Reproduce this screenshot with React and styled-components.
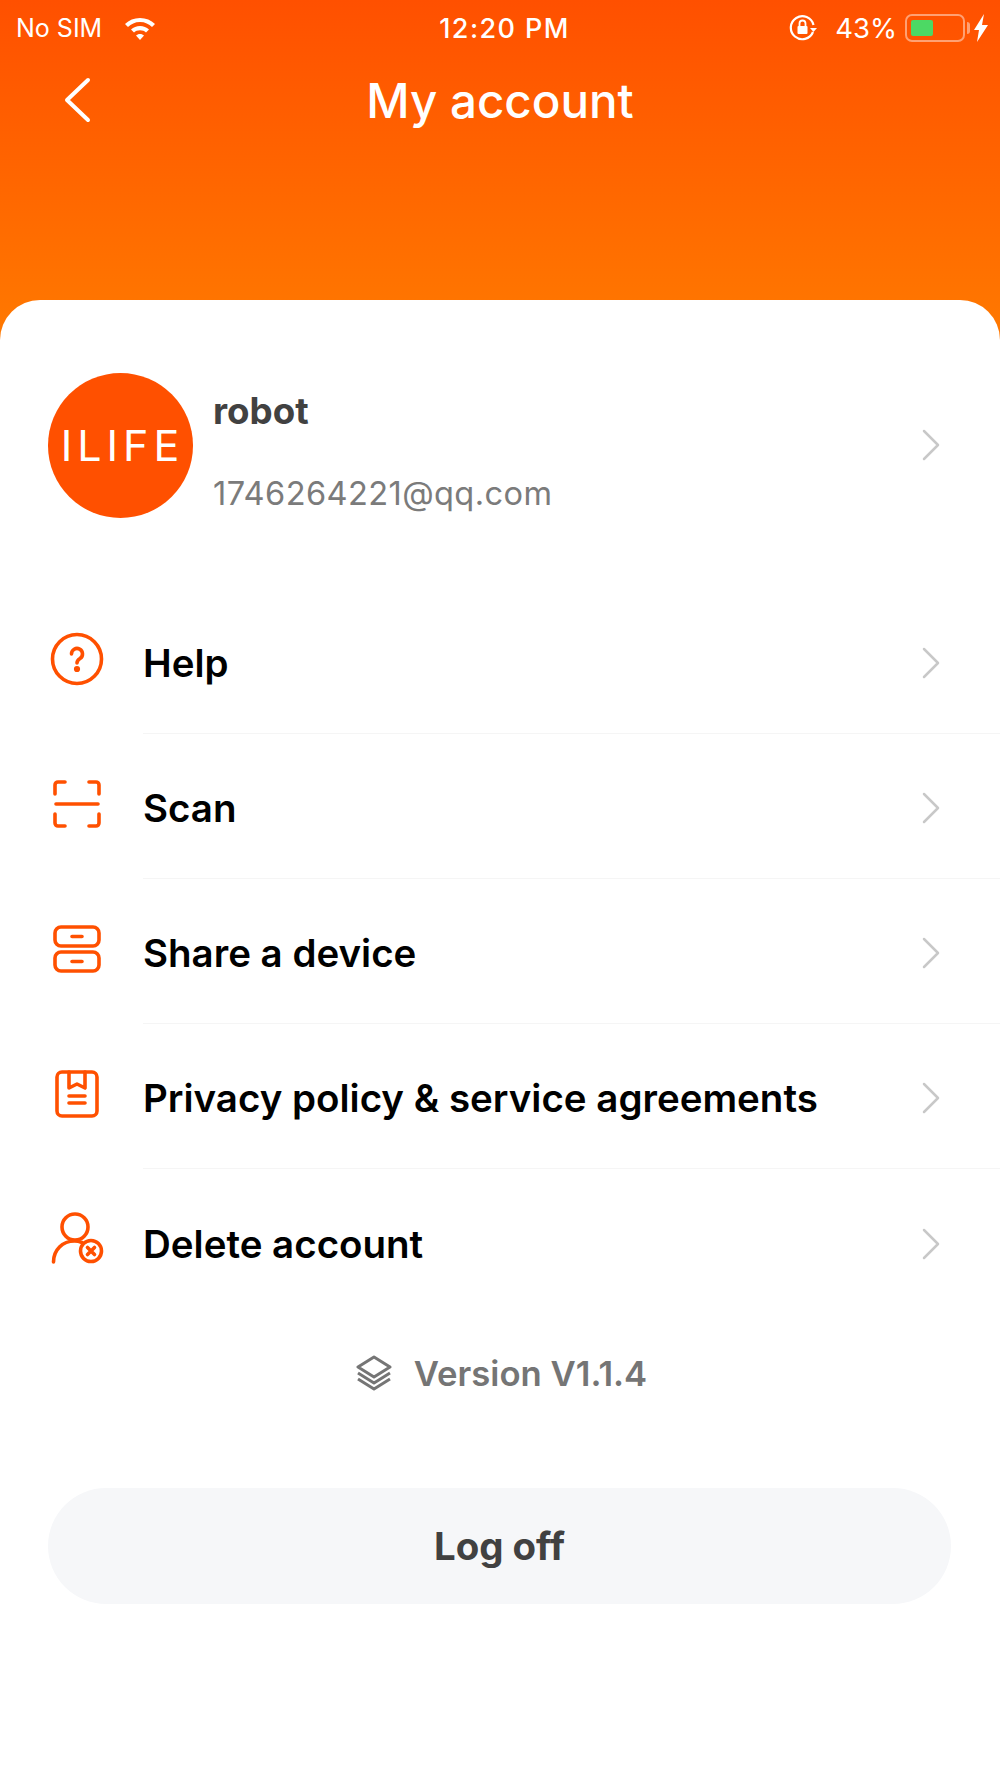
import React from 'react'
import styled, { createGlobalStyle } from 'styled-components'

const Global = createGlobalStyle`
  html, body { margin: 0; padding: 0; background: #fff; }
  * { box-sizing: border-box; }
  body { font-family: Inter, "Liberation Sans", sans-serif; }
`

const Page = styled.div`
  width: 1000px;
  height: 1778px;
  overflow: hidden;
  display: flex;
  flex-direction: column;
  background: linear-gradient(180deg, #ff5000 0, #ff7800 330px, #ff7800 100%);
`

const StatusBar = styled.div`
  height: 50px;
  padding: 6px 12px 0 16px;
  display: grid;
  grid-template-columns: 1fr auto 1fr;
  align-items: center;
  color: #fff;
  font-size: 25px;
`

const StatusSide = styled.div`
  display: flex;
  align-items: center;
  justify-content: ${p => (p.$end ? 'flex-end' : 'flex-start')};
  gap: ${p => p.$gap}px;
`

const Percent = styled.span`
  font-size: 27.5px;
`

const Time = styled.span`
  font-size: 27px;
  letter-spacing: 1.4px;
  font-weight: 500;
  margin-left: 5px;
`

const Battery = styled.div`
  position: relative;
  width: 60px;
  height: 28px;
  padding: 4px;
  border: 2px solid rgba(255, 255, 255, 0.45);
  border-radius: 7px;
  margin-left: -10px;
  &::after {
    content: '';
    position: absolute;
    right: -7px;
    top: 6px;
    width: 3px;
    height: 12px;
    background: rgba(255, 255, 255, 0.45);
    border-radius: 0 3px 3px 0;
  }
`

const BatteryFill = styled.div`
  width: 22px;
  height: 100%;
  background: #4cd964;
  border-radius: 2px;
`

const Bolt = styled.svg`
  margin-left: -9px;
`

const TitleBar = styled.div`
  height: 250px;
  padding: 23px 0 0;
  position: relative;
  text-align: center;
`

const Title = styled.h1`
  margin: 0;
  color: #fff;
  font-size: 47.5px;
  line-height: 56px;
  font-weight: 500;
`

const BackIcon = styled.svg`
  position: absolute;
  left: 64px;
  top: 27px;
`

const Card = styled.main`
  flex: 1;
  background: #fff;
  border-radius: 40px 40px 0 0;
  padding-top: 72px;
`

const Profile = styled.section`
  display: flex;
  align-items: center;
  height: 146px;
  padding-left: 48px;
  margin-bottom: 71px;
`

const Avatar = styled.div`
  width: 145px;
  height: 145px;
  flex: none;
  border-radius: 50%;
  background: #ff5000;
  color: #fff;
  display: flex;
  align-items: center;
  justify-content: center;
  font-size: 43px;
  font-weight: 400;
  letter-spacing: 5px;
  padding-left: 4px;
`

const ProfileText = styled.div`
  flex: 1;
  align-self: stretch;
  padding-left: 20px;
  display: flex;
  flex-direction: column;
  justify-content: space-between;
  padding-top: 18px;
  padding-bottom: 5px;
`

const Name = styled.div`
  color: #414141;
  font-size: 36.7px;
  line-height: 42px;
  font-weight: 700;
`

const Email = styled.div`
  color: #7b7b7b;
  font-size: 32.6px;
  line-height: 40px;
  letter-spacing: 0.4px;
`

const Chevron = styled.svg`
  flex: none;
  margin-right: 60px;
`

const Row = styled.div`
  display: flex;
  align-items: center;
  height: 145px;
`

const RowIcon = styled.div`
  width: 143px;
  flex: none;
  display: flex;
  justify-content: center;
  padding: 0 0 5px 11px;
`

const RowBody = styled.div`
  flex: 1;
  align-self: stretch;
  display: flex;
  align-items: center;
  justify-content: space-between;
  padding-top: 4px;
  border-bottom: ${p => (p.$last ? 'none' : '1px solid #f5f5f5')};
`

const RowLabel = styled.span`
  color: #000;
  font-size: 38.5px;
  font-weight: 600;
`

const Version = styled.div`
  display: flex;
  align-items: center;
  justify-content: center;
  gap: 22px;
  margin-top: 34px;
  height: 50px;
  padding-left: 3px;
  color: #757575;
  font-size: 34.7px;
  font-weight: 600;
`

const LogOff = styled.button`
  display: block;
  width: 903px;
  height: 116px;
  margin: 90px 0 0 48px;
  border: 0;
  border-radius: 58px;
  background: #f6f7f9;
  color: #414141;
  font-family: inherit;
  font-size: 38.4px;
  font-weight: 700;
`

const Arrow = () => (
  <Chevron width="18" height="32" viewBox="0 0 18 32" fill="none" stroke="#c8c8c8" strokeWidth="2.5" strokeLinecap="round" strokeLinejoin="round">
    <path d="M2 2l14 14L2 30" />
  </Chevron>
)

const Orange = ({ children }) => (
  <svg width="54" height="54" viewBox="0 0 54 54" fill="none" stroke="#ff5000" strokeWidth="3.6" strokeLinecap="round" strokeLinejoin="round">
    {children}
  </svg>
)

const HelpIcon = () => (
  <Orange>
    <circle cx="27" cy="27" r="24.5" />
    <path d="M21.5 22a5.5 5.5 0 1 1 8.500 4.600c-2 1.300-3 2.200-3 4.400" />
    <circle cx="27" cy="37" r="1.300" fill="#ff5000" />
  </Orange>
)

const ScanIcon = () => (
  <Orange>
    <path d="M15 5H8a3 3 0 0 0-3 3v9M39 5h7a3 3 0 0 1 3 3v9M15 49H8a3 3 0 0 1-3-3v-9M39 49h7a3 3 0 0 0 3-3v-9M6 27h42" />
  </Orange>
)

const ShareIcon = () => (
  <Orange>
    <rect x="5" y="5" width="44" height="19" rx="6" />
    <rect x="5" y="30" width="44" height="19" rx="6" />
    <path d="M22 14.500h10M22 39.500h10" />
  </Orange>
)

const PolicyIcon = () => (
  <Orange>
    <rect x="7" y="5" width="40" height="44" rx="5" />
    <path d="M19 5v16l8-4 8 4V5M19 29h16M19 36h16" />
  </Orange>
)

const DeleteIcon = () => (
  <Orange>
    <circle cx="25" cy="15" r="13" />
    <path d="M3.500 50c0-12 9-21 21-21 3 0 5 .5 7.500 1.500" />
    <circle cx="41" cy="39" r="10.500" />
    <path d="M37.500 35.500l7 7M44.500 35.500l-7 7" />
  </Orange>
)

const rows = [
  { label: 'Help', icon: <HelpIcon /> },
  { label: 'Scan', icon: <ScanIcon /> },
  { label: 'Share a device', icon: <ShareIcon /> },
  { label: 'Privacy policy & service agreements', icon: <PolicyIcon /> },
  { label: 'Delete account', icon: <DeleteIcon /> }
]

const App = () => (
  <Page>
    <Global />
    <StatusBar>
      <StatusSide $gap={22}>
        <span>No SIM</span>
        <svg width="32" height="24" viewBox="0 0 32 24" fill="#fff">
          <path d="M16 2C10 2 5 4 1 8l3 3c3-3 7-5 12-5s9 2 12 5l3-3c-4-4-9-6-15-6z" />
          <path d="M16 10c-3.500 0-6.500 1.200-9 3.500l3 3c1.500-1.500 3.500-2.300 6-2.300s4.500.8 6 2.300l3-3c-2.500-2.300-5.500-3.500-9-3.500z" />
          <path d="M16 18c-1.700 0-3 .6-4 1.500l4 4.500 4-4.500c-1-.9-2.300-1.500-4-1.500z" />
        </svg>
      </StatusSide>
      <Time>12:20 PM</Time>
      <StatusSide $end $gap={18}>
        <svg width="28" height="28" viewBox="0 0 28 28" fill="none" stroke="#fff" strokeWidth="2.200">
          <path d="M24 18a11.500 11.500 0 1 1 .5-7" />
          <path d="M21 14l3.500 4 3.500-4" fill="#fff" stroke="none" />
          <rect x="8.500" y="12" width="10" height="8" rx="1" fill="#fff" stroke="none" />
          <path d="M10.500 12V9.500a3 3 0 0 1 6 0V12" strokeWidth="1.800" />
        </svg>
        <Percent>43%</Percent>
        <Battery><BatteryFill /></Battery>
        <Bolt width="14" height="28" viewBox="0 0 14 28" fill="#fff">
          <path d="M10 0L0 16h5l-2 12L14 11H8z" />
        </Bolt>
      </StatusSide>
    </StatusBar>
    <TitleBar>
      <BackIcon width="28" height="46" viewBox="0 0 28 46" fill="none" stroke="#fff" strokeWidth="4" strokeLinecap="round" strokeLinejoin="round">
        <path d="M24 3L3 23l21 20" />
      </BackIcon>
      <Title>My account</Title>
    </TitleBar>
    <Card>
      <Profile>
        <Avatar>ILIFE</Avatar>
        <ProfileText>
          <Name>robot</Name>
          <Email>1746264221@qq.com</Email>
        </ProfileText>
        <Arrow />
      </Profile>
      {rows.map((r, i) => (
        <Row key={r.label}>
          <RowIcon>{r.icon}</RowIcon>
          <RowBody $last={i === rows.length - 1}>
            <RowLabel>{r.label}</RowLabel>
            <Arrow />
          </RowBody>
        </Row>
      ))}
      <Version>
        <svg width="36" height="36" viewBox="0 0 36 36" fill="none" stroke="#757575" strokeWidth="3" strokeLinejoin="round">
          <path d="M18 2L2 12l16 10 16-10z" />
          <path d="M2 18l16 10 16-10M2 24l16 10 16-10" />
        </svg>
        <span>Version V1.1.4</span>
      </Version>
      <LogOff>Log off</LogOff>
    </Card>
  </Page>
)

export default App
